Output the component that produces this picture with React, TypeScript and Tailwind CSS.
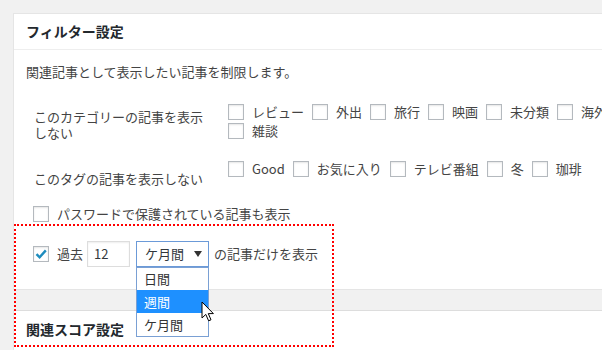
import React from "react";

const CB = ({ checked }: { checked?: boolean }) => (
  <span className="inline-flex w-4 h-4 shrink-0 items-center justify-center border border-[#b4b9be] bg-white shadow-[inset_0_1px_2px_rgba(0,0,0,0.1)]">
    {checked && (
      <svg width="12" height="12" viewBox="0 0 12 12">
        <path d="M1.5 6.2 L4.6 9.3 L10.8 2.4" fill="none" stroke="#1e8cbe" strokeWidth="2.4" />
      </svg>
    )}
  </span>
);

const Item = ({ label }: { label: string }) => (
  <span className="inline-flex h-[19px] items-center mr-2">
    <CB />
    <span className="ml-2">{label}</span>
  </span>
);

export default function App() {
  const cats = ["レビュー", "外出", "旅行", "映画", "未分類", "海外", "雑談"];
  const tags = ["Good", "お気に入り", "テレビ番組", "冬", "珈琲"];
  return (
    <div className="relative w-[602px] h-[350px] overflow-hidden bg-[#f1f1f1] pt-[13px] pl-[13px] font-['Noto_Sans_CJK_JP','Noto_Sans',sans-serif] text-[13px] text-[#444]">
      {/* Panel 1 */}
      <div className="w-[660px] bg-white border border-[#e5e5e5]">
        <div className="h-[36px] border-b border-[#eee] px-3 flex items-center text-[14px] font-bold text-[#23282d]">
          フィルター設定
        </div>
        <div className="px-3 pb-[22px]">
          <p className="mt-[13px] leading-[18px]">関連記事として表示したい記事を制限します。</p>

          <div className="mt-[21px] pl-2 flex items-start">
            <div className="w-[194px] shrink-0 pt-[7px] leading-[16px]">
              <div className="w-[176px]">このカテゴリーの記事を表示しない</div>
            </div>
            <div className="w-[400px] flex flex-wrap leading-[19px]">
              {cats.map((c) => (
                <Item key={c} label={c} />
              ))}
            </div>
          </div>

          <div className="mt-[18px] pl-2 flex items-start">
            <div className="w-[194px] shrink-0 pt-[12px] leading-[16px]">このタグの記事を表示しない</div>
            <div className="w-[400px] flex flex-wrap leading-[19px]">
              {tags.map((c) => (
                <Item key={c} label={c} />
              ))}
            </div>
          </div>

          <div className="mt-[17px] pl-[7px] h-[19px] flex items-center">
            <CB />
            <span className="ml-2">パスワードで保護されている記事も表示</span>
          </div>

          <div className="mt-[18px] pl-[7px] h-[26px] flex items-center">
            <CB checked />
            <span className="ml-2">過去</span>
            <div className="ml-1 w-[43px] h-[26px] border border-[#ddd] shadow-[inset_0_1px_2px_rgba(0,0,0,0.07)] flex items-center pl-[6px] text-[#32373c]">
              12
            </div>
            <div className="relative ml-[6px] w-[73px] h-[26px]">
              <div className="w-full h-full border border-[#6b9ad8] flex items-center justify-between pl-[8px] pr-[6px] text-[#32373c]">
                <span>ケ月間</span>
                <svg width="8" height="6" viewBox="0 0 8 6">
                  <path d="M0 0 H8 L4 6 Z" fill="#333" />
                </svg>
              </div>
              <div className="absolute left-0 top-[26px] w-[73px] h-[70px] bg-white border border-[#7aa0d4] z-10 text-[#333]">
                <div className="h-[22px] flex items-center pl-[7px]">日間</div>
                <div className="h-[23px] flex items-center pl-[7px] bg-[#1e90ff] text-white">週間</div>
                <div className="h-[23px] flex items-center pl-[7px]">ケ月間</div>
              </div>
            </div>
            <span className="ml-[5px]">の記事だけを表示</span>
          </div>
        </div>
      </div>

      {/* Panel 2 */}
      <div className="mt-[20px] w-[660px] h-[60px] bg-white border border-[#e5e5e5] border-t-[#ddd]">
        <div className="h-[36px] px-3 flex items-center text-[14px] font-bold text-[#23282d]">関連スコア設定</div>
      </div>

      {/* annotation box */}
      <div className="absolute left-[14px] top-[224px] w-[320px] h-[123px] border-2 border-dotted border-[#f00] z-20 pointer-events-none" />

      {/* mouse cursor */}
      <svg className="absolute left-[201px] top-[301px] z-30" width="14" height="22" viewBox="0 0 14 22">
        <path d="M1 1 L1 17 L4.8 13.4 L7.6 19.8 L10 18.8 L7.3 12.6 L12.4 12.6 Z" fill="#fff" stroke="#000" strokeWidth="1" strokeLinejoin="round" />
      </svg>
    </div>
  );
}
